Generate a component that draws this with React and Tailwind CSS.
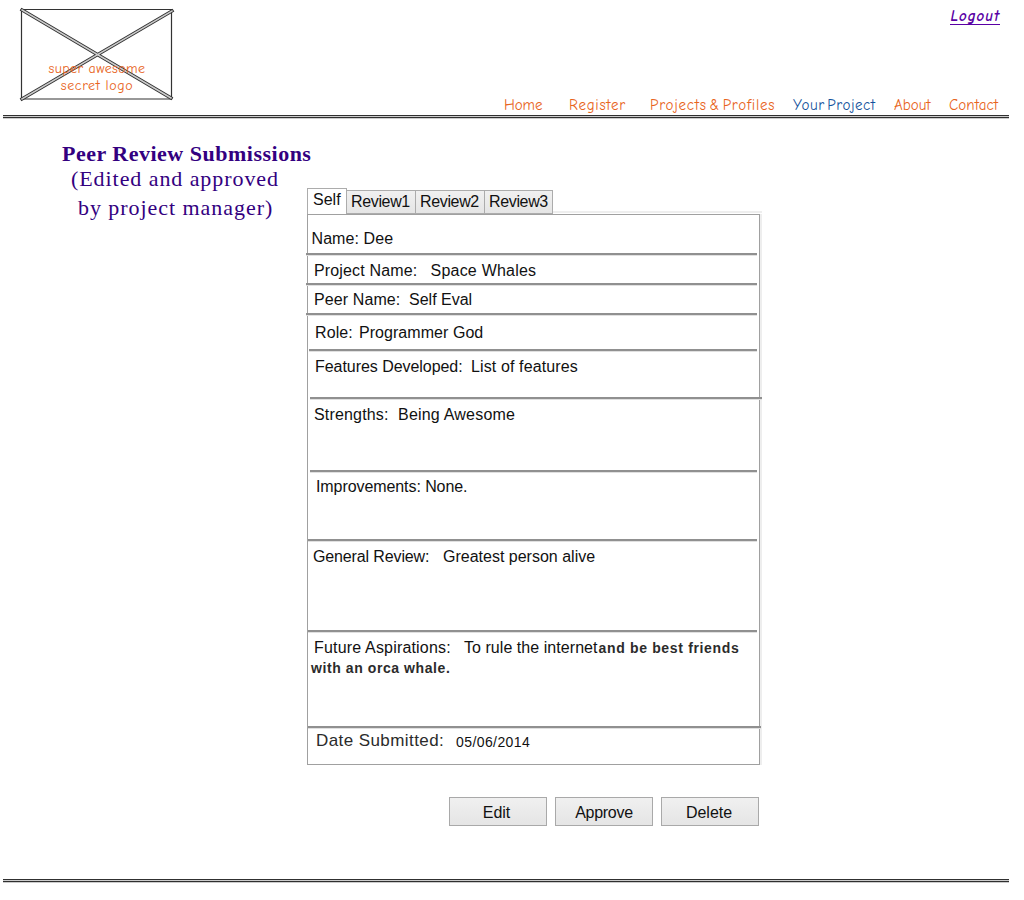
import React from "react";

const tabs = [
  { name: "Self", style: "h-[26px] w-[40px] border-b-0 bg-white pl-[5px] leading-[22px]" },
  { name: "Review1", style: "h-[24px] w-[70px] -ml-px bg-gradient-to-b from-[#f0f0f0] to-[#e5e5e5] pl-[4px] tracking-[-0.35px] leading-[22px]" },
  { name: "Review2", style: "h-[24px] w-[70px] -ml-px bg-gradient-to-b from-[#f0f0f0] to-[#e5e5e5] pl-[4px] tracking-[-0.35px] leading-[22px]" },
  { name: "Review3", style: "h-[24px] w-[69px] -ml-px bg-gradient-to-b from-[#f0f0f0] to-[#e5e5e5] pl-[4px] tracking-[-0.35px] leading-[22px]" },
];

const rows = [
  { label: "Name: Dee", row: "h-[40px] pt-[14px]", l: "pl-[3.5px] tracking-[0.08px]", line: "-ml-[2px] w-[451px]" },
  { label: "Project Name:", value: "Space Whales", row: "h-[30px] pt-[6px]", l: "pl-[6px] w-[122.5px] tracking-[0.15px]", v: "tracking-[0.22px]", line: "-ml-[2px] w-[451px]" },
  { label: "Peer Name:", value: "Self Eval", row: "h-[30px] pt-[5px]", l: "pl-[6px] w-[101px] tracking-[0.1px]", v: "", line: "-ml-[2px] w-[451px]" },
  { label: "Role:", value: "Programmer God", row: "h-[36px] pt-[8px]", l: "pl-[7px] w-[51px] tracking-[0.1px]", v: "tracking-[0.05px]", line: "ml-[1px] w-[448px]" },
  { label: "Features Developed:", value: "List of features", row: "h-[48px] pt-[6px]", l: "pl-[7px] w-[163px] tracking-[-0.05px]", v: "tracking-[0.12px]", line: "ml-[2px] w-[452px]" },
  { label: "Strengths:", value: "Being Awesome", row: "h-[73px] pt-[6px]", l: "pl-[6px] w-[90px] tracking-[0.17px]", v: "tracking-[0.21px]", line: "ml-[2px] w-[447px]" },
  { label: "Improvements: None.", row: "h-[69px] pt-[5px]", l: "pl-[8px] tracking-[-0.08px]", line: "w-[449px]" },
  { label: "General Review:", value: "Greatest person alive", row: "h-[91px] pt-[6px]", l: "pl-[5px] w-[135px] tracking-[-0.13px]", v: "", line: "w-[449px]" },
  { label: "Future Aspirations:", value: "To rule the internet", row: "h-[96px] pt-[6px]", l: "pl-[6px] w-[156px] tracking-[0.18px]", v: "tracking-[0.05px]", line: "w-[453px]", more: true },
];

const nav = [
  { name: "Home", style: "w-[65px] text-[#e8641b] tracking-[-0.1px]" },
  { name: "Register", style: "w-[81px] text-[#e8641b] tracking-[0.7px]" },
  { name: "Projects & Profiles", style: "w-[143px] text-[#e8641b] tracking-[0.75px] [word-spacing:-3px]" },
  { name: "Your Project", style: "w-[101px] text-[#12529c] tracking-[0.55px] [word-spacing:-3px]" },
  { name: "About", style: "w-[55px] text-[#e8641b]" },
  { name: "Contact", style: "w-[60px] text-[#e8641b] tracking-[0.1px]" },
];

const buttons = [
  { name: "Edit", style: "pr-[3px]" },
  { name: "Approve", style: "tracking-[-0.3px]" },
  { name: "Delete", style: "pr-[2px]" },
];

const hand = "font-['Comic_Neue','Comic_Sans_MS',cursive]";

function Rule() {
  return <div className="ml-[3px] h-[3px] w-[1006px] border-y border-[#303030] bg-[#cccccc] shadow-[0_1px_0_#cccccc]" />;
}

function Logo() {
  return (
    <div className="relative h-[100px] w-[180px]">
      <svg width="180" height="104" viewBox="0 0 180 104" fill="none">
        <path d="M21.5 9.5H171.5V99H21.5Z" stroke="#333" strokeWidth="1.2" />
        <path d="M22 10L171 98M22 99L172 11" stroke="#333" strokeWidth="3.4" strokeLinecap="square" />
        <path d="M22 10L171 98M22 99L172 11" stroke="#ccc" strokeWidth="1.5" strokeLinecap="square" />
      </svg>
      <div className={`absolute left-[37px] top-[60px] w-[120px] text-center text-[14px] leading-[17px] text-[#e8641b] ${hand}`}>
        <div className="tracking-[0.4px]">super awesome</div>
        <div className="tracking-[0.6px]">secret logo</div>
      </div>
    </div>
  );
}

export default function App() {
  return (
    <div className="h-[900px] w-[1024px] overflow-hidden bg-white font-['Liberation_Sans',Arial,sans-serif] text-[16px] leading-[20px] text-[#111]">
      <header className="flex h-[115px] justify-between">
        <Logo />
        <div className="flex w-[520px] flex-col justify-between pt-[8px]">
          <a className={`mr-[24px] self-end border-b border-[#5a00a5] text-[15px] font-bold italic leading-[16px] tracking-[1px] text-[#5a00a5] ${hand}`}>Logout</a>
          <nav className={`flex whitespace-nowrap text-[15px] leading-[20px] ${hand}`}>
            {nav.map((n) => (
              <a key={n.name} className={n.style}>{n.name}</a>
            ))}
          </nav>
        </div>
      </header>
      <Rule />

      <main className="flex h-[761px]">
        <h1 className="w-[307px] whitespace-nowrap pl-[62px] pt-[23px] font-['Liberation_Serif',serif] text-[22px] text-[#330080]">
          <div className="h-[25px] leading-[26px] font-bold tracking-[0.5px]">Peer Review Submissions</div>
          <div className="h-[29px] pl-[9px] leading-[26px] tracking-[0.93px]">(Edited and approved</div>
          <div className="pl-[16px] leading-[26px] tracking-[0.95px]">by project manager)</div>
        </h1>

        <section className="w-[455px] pt-[70px]">
          <div className="flex items-end">
            {tabs.map((t) => (
              <div key={t.name} className={`border border-[#acacac] whitespace-nowrap ${t.style}`}>{t.name}</div>
            ))}
            <div className="h-[3px] flex-1 border-t-2 border-[#eeeeee]" />
          </div>

          <div className="h-[551px] w-[453px] border border-[#a0a0a0] shadow-[2px_0_0_#eeeeee]">
            {rows.map((r) => (
              <div key={r.label} className={`flex flex-col justify-between whitespace-nowrap ${r.row}`}>
                <div>
                  <div className="flex">
                    <span className={`shrink-0 ${r.l}`}>{r.label}</span>
                    <span className={r.v}>{r.value}</span>
                    {r.more && <span className="ml-[1px] text-[14px] font-bold tracking-[0.66px] text-[#2b2b2b]">and be best friends</span>}
                  </div>
                  {r.more && <div className="pl-[3px] text-[14px] font-bold tracking-[0.58px] text-[#2b2b2b]">with an orca whale.</div>}
                </div>
                <div className={`h-[2px] shrink-0 bg-[#909090] shadow-[0_1px_0_#e0e0e0] ${r.line}`} />
              </div>
            ))}
            <div className="flex pt-[3px] text-[#2b2b2b]">
              <span className="w-[148px] pl-[8px] text-[17px] tracking-[0.42px]">Date Submitted:</span>
              <span className="pt-px text-[14px] tracking-[0.41px] text-[#111]">05/06/2014</span>
            </div>
          </div>

          <div className="mt-[32px] flex justify-end gap-[8px] pr-[3px]">
            {buttons.map((b) => (
              <button key={b.name} className={`h-[29px] w-[98px] border border-[#a9a9a9] bg-gradient-to-b from-[#f0f0f0] to-[#e5e5e5] pt-[3px] text-center ${b.style}`}>{b.name}</button>
            ))}
          </div>
        </section>
      </main>
      <Rule />
    </div>
  );
}
